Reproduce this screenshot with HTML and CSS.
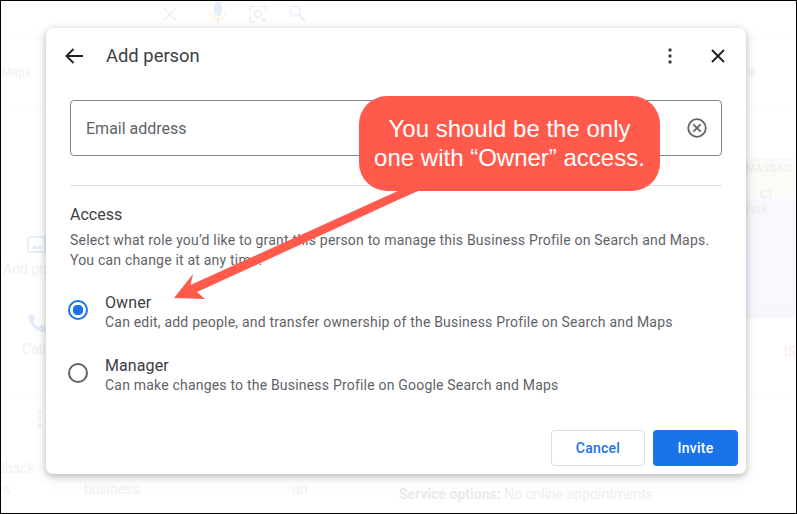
FILE: index.html
```
<!DOCTYPE html>
<html lang="en">
<head>
<meta charset="utf-8">
<title>Add person</title>
<link rel="stylesheet" href="styles.css">
</head>
<body>
<div class="screen">
  <div class="backdrop" aria-hidden="true">
    <div class="rule rule-a"></div>
    <div class="rule rule-b"></div>
    <div class="rule rule-c"></div>
    <svg class="bg-icon i-x" viewBox="0 0 18 18"><path d="M3 3l12 12M15 3L3 15" fill="none" stroke="#eeeff0" stroke-width="1.6"/></svg>
    <svg class="bg-icon i-mic" viewBox="0 0 18 24"><rect x="5" y="1" width="8" height="14" rx="4" fill="#e6eefc"/><path d="M2 11c0 5 3 7 7 7s7-2 7-7" fill="none" stroke="#fdf3de" stroke-width="1.5"/><path d="M9 18v4" stroke="#fbe9e7" stroke-width="2"/></svg>
    <svg class="bg-icon i-lens" viewBox="0 0 20 20"><path d="M2 7V4q0-2 2-2h3M13 2h3q2 0 2 2v3" fill="none" stroke="#fbe9e7" stroke-width="1.6"/><path d="M2 13v3q0 2 2 2h3" fill="none" stroke="#e6eefc" stroke-width="1.6"/><circle cx="10" cy="10" r="3.5" fill="none" stroke="#e6eefc" stroke-width="1.6"/><circle cx="16" cy="16" r="2" fill="#e7f4ea"/></svg>
    <svg class="bg-icon i-search" viewBox="0 0 18 18"><circle cx="7" cy="7" r="5" fill="none" stroke="#e8eefa" stroke-width="1.6"/><path d="M11 11l6 6" stroke="#e8eefa" stroke-width="1.8"/></svg>
    <svg class="bg-icon i-photo" viewBox="0 0 18 18"><rect x="1" y="2" width="16" height="14" rx="1.5" fill="none" stroke="#e4ecfb" stroke-width="1.5"/><path d="M4 13l3.5-4 2.5 3 2-2 3 3z" fill="#e4ecfb"/></svg>
    <svg class="bg-icon i-call" viewBox="0 0 20 20"><path d="M4 1l3 1 1 4-2 2c1 3 3 5 6 6l2-2 4 1 1 3-2 3C9 19 2 11 1 3z" fill="#e4ecfb"/></svg>
    <svg class="bg-icon i-dots" viewBox="0 0 8 20"><circle cx="4" cy="3" r="1.6" fill="#eceff3"/><circle cx="4" cy="10" r="1.6" fill="#eceff3"/><circle cx="4" cy="17" r="1.6" fill="#eceff3"/></svg>
    <span class="ghost t-maps">Maps</span>
    <span class="ghost t-s">s</span>
    <span class="ghost t-photo">Add ph</span>
    <span class="ghost t-call">Call</span>
    <span class="ghost t-back">lback</span>
    <span class="ghost t-s2">s</span>
    <span class="ghost t-biz">business</span>
    <span class="ghost t-un">un</span>
    <span class="ghost t-service"><b>Service options:</b> No online appointments</span>
    <span class="ghost t-is">IS</span>
    <div class="map">
      <span class="map-mass">MASSAC</span>
      <span class="map-ct">CT</span>
      <span class="map-york">York</span>
    </div>
  </div>

  <section class="dialog">
    <header class="head">
      <svg class="icon-back" viewBox="0 0 18 16"><path d="M8.5 1L1.5 8l7 7M2 8h16" fill="none" stroke="#202124" stroke-width="1.9"/></svg>
      <h1 class="title">Add person</h1>
      <svg class="icon-more" viewBox="0 0 4 16"><circle cx="2" cy="2" r="1.7"/><circle cx="2" cy="8" r="1.7"/><circle cx="2" cy="14" r="1.7"/></svg>
      <svg class="icon-close" viewBox="0 0 14 14"><path d="M1 1l12 12M13 1L1 13" fill="none" stroke="#202124" stroke-width="1.9"/></svg>
    </header>
    <div class="field">
      <span class="placeholder">Email address</span>
      <svg class="icon-clear" viewBox="0 0 20 20"><circle cx="10" cy="10" r="8.8" fill="none" stroke="#5f6368" stroke-width="1.8"/><path d="M6.4 6.4l7.2 7.2M13.6 6.4l-7.2 7.2" fill="none" stroke="#5f6368" stroke-width="1.8"/></svg>
    </div>
    <hr class="divider">
    <h2 class="section">Access</h2>
    <p class="intro">Select what role you’d like to grant this person to manage this Business Profile on Search and Maps.<br>You can change it at any time.</p>
    <div class="roles">
      <div class="role">
        <span class="radio radio-on"></span>
        <div class="role-text">
          <div class="role-name">Owner</div>
          <div class="role-desc">Can edit, add people, and transfer ownership of the Business Profile on Search and Maps</div>
        </div>
      </div>
      <div class="role">
        <span class="radio"></span>
        <div class="role-text">
          <div class="role-name">Manager</div>
          <div class="role-desc">Can make changes to the Business Profile on Google Search and Maps</div>
        </div>
      </div>
    </div>
    <footer class="actions">
      <button class="btn btn-cancel">Cancel</button>
      <button class="btn btn-invite">Invite</button>
    </footer>
  </section>

  <svg class="arrow" viewBox="0 0 797 514"><polygon points="174,298 193,274 190.5,285 400,190 420,180 425,188 400,199 197,292 205,299" fill="#ff5a4c"/></svg>
  <div class="callout">You should be the only<br>one with “Owner” access.</div>
</div>
</body>
</html>
```
FILE: styles.css
```
* { box-sizing: border-box; }
html, body { margin: 0; padding: 0; }
body { width: 797px; height: 514px; overflow: hidden; background: #fff; font-family: Roboto, "Liberation Sans", sans-serif; }
.screen { position: relative; width: 797px; height: 514px; border: 1px solid #000; border-width: 1px 1px 1.5px 1px; overflow: hidden; background: #fff; }
.backdrop { position: absolute; left: -1px; top: -1px; width: 797px; height: 514px; color: #f0f1f2; font-size: 14px; }
.rule { position: absolute; background: #fafafa; height: 1px; }
.rule-a { left: 0; top: 39px; width: 797px; }
.rule-b { left: 0; top: 107px; width: 797px; }
.rule-c { left: 0; top: 393px; width: 797px; }
.bg-icon { position: absolute; }
.i-x { left: 161px; top: 5px; width: 18px; height: 18px; }
.i-mic { left: 209px; top: 1px; width: 18px; height: 24px; }
.i-lens { left: 248px; top: 4px; width: 20px; height: 20px; }
.i-search { left: 288px; top: 4px; width: 18px; height: 18px; }
.i-photo { left: 27px; top: 235px; width: 19px; height: 19px; }
.i-call { left: 27px; top: 313px; width: 20px; height: 20px; }
.i-dots { left: 36px; top: 408px; width: 8px; height: 20px; }
.ghost { position: absolute; white-space: nowrap; line-height: 16px; }
.t-maps { left: 1px; top: 64px; font-size: 12px; }
.t-s { left: 748px; top: 64px; }
.t-photo { left: 3px; top: 261px; }
.t-call { left: 22px; top: 341px; }
.t-back { left: 1px; top: 460px; }
.t-s2 { left: 3px; top: 481px; }
.t-biz { left: 84px; top: 481px; }
.t-un { left: 292px; top: 481px; }
.t-service { left: 399px; top: 486px; color: #eeeff0; }
.t-service b { font-weight: 700; color: #e9eaeb; }
.t-is { left: 784px; top: 344px; color: #fcf0ee; font-weight: 700; }
.map { position: absolute; left: 746px; top: 158px; width: 51px; height: 160px; background: linear-gradient(#fafbf8 0, #fcfcf7 36px, #f7f9fe 44px, #f6f8fe 100%); color: #ecedec; font-size: 11px; }
.map span { position: absolute; white-space: nowrap; }
.map-mass { left: 0; top: 5px; letter-spacing: 1px; font-size: 10px; }
.map-ct { left: 14px; top: 30px; }
.map-york { left: -2px; top: 44px; font-size: 12px; }

.dialog { position: absolute; left: 45px; top: 27px; width: 700px; height: 446px; background: #fff; border-radius: 7px; box-shadow: 0 2px 6px rgba(60,64,67,.3), 0 4px 14px rgba(60,64,67,.12); display: flex; flex-direction: column; padding: 0 8px 8px 24px; }
.head { display: flex; align-items: center; height: 56px; flex: none; }
.icon-back { width: 18px; height: 16px; margin-left: -5px; flex: none; }
.title { margin: 0 0 0 23px; font: 400 18.4px/24px Roboto, sans-serif; color: #3c4043; flex: 1; }
.icon-more { width: 4px; height: 16px; fill: #3c4043; margin-right: 39px; flex: none; }
.icon-close { width: 14px; height: 14px; margin-right: 13px; flex: none; }
.field { margin-top: 16px; width: 652px; height: 56px; border: 1px solid #80868b; border-radius: 4px; display: flex; align-items: center; justify-content: space-between; padding: 0 14px 0 15px; flex: none; }
.placeholder { font-size: 16px; color: #5f6368; }
.icon-clear { width: 20px; height: 20px; }
.divider { margin: 29px 0 0; width: 652px; border: 0; border-top: 1px solid #dadce0; flex: none; }
.section { margin: 20px 0 0; font: 400 16px/18px Roboto, sans-serif; color: #3c4043; }
.intro { margin: 6px 0 0; font-size: 14px; line-height: 20px; letter-spacing: .2px; color: #5f6368; }
.roles { display: flex; flex-direction: column; gap: 24px; margin-top: 23px; margin-left: -2px; }
.role { display: flex; align-items: center; gap: 17px; }
.radio { width: 20px; height: 20px; border: 2px solid #5f6368; border-radius: 50%; flex: none; margin-bottom: 6px; }
.radio-on { border-color: #1a73e8; background: radial-gradient(circle, #1a73e8 0 5px, transparent 5.5px); }
.role-name { font-size: 16px; line-height: 20px; letter-spacing: .1px; color: #3c4043; }
.role-desc { font-size: 14px; line-height: 20px; letter-spacing: .2px; color: #5f6368; margin-top: -1px; }
.actions { margin-top: auto; display: flex; justify-content: flex-end; gap: 8px; }
.btn { height: 36px; border-radius: 4px; font: 500 14px/20px Roboto, sans-serif; letter-spacing: .25px; padding: 0; }
.btn-cancel { width: 94px; background: #fff; border: 1px solid #dadce0; color: #1a73e8; }
.btn-invite { width: 85px; background: #1a73e8; border: 0; color: #fff; }

.arrow { position: absolute; left: -1px; top: -1px; width: 797px; height: 514px; }
.callout { position: absolute; left: 358px; top: 95px; width: 301px; height: 95px; background: #ff5a4c; border-radius: 28px; color: #fff; font: 400 24px/29px "Liberation Sans", Arial, sans-serif; text-align: center; display: flex; align-items: center; justify-content: center; padding-bottom: 2px; }
```
